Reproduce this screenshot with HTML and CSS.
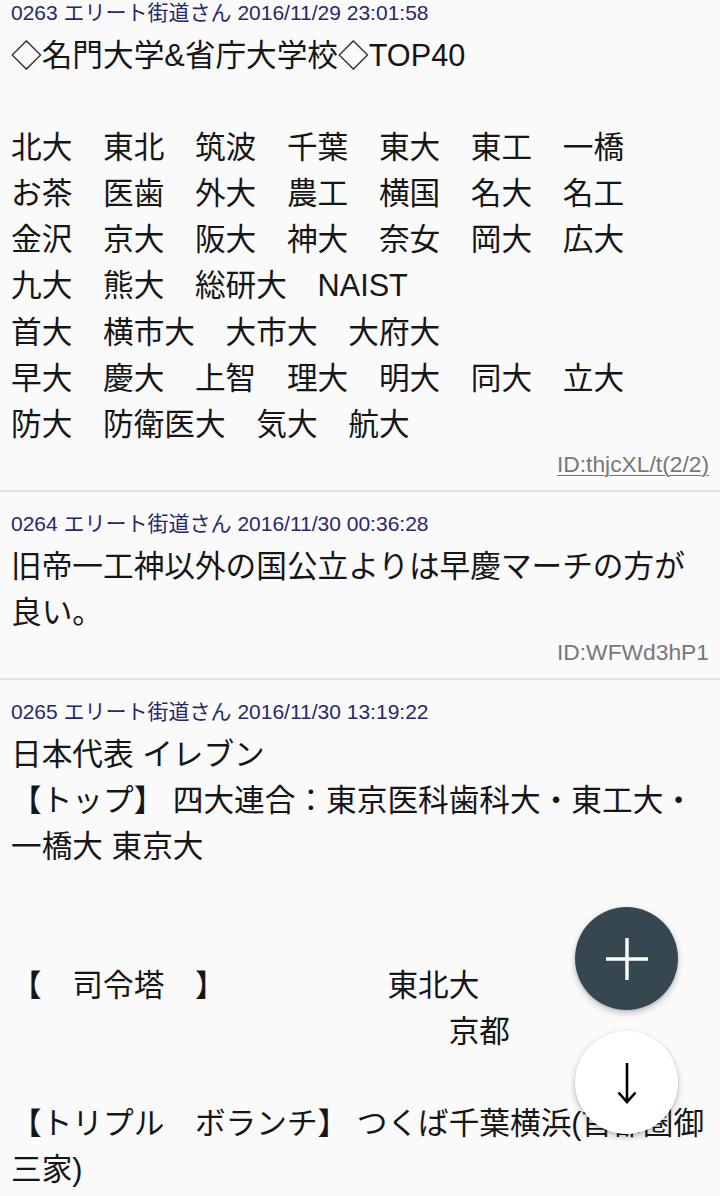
FILE: index.html
```html
<!DOCTYPE html>
<html lang="ja">
<head>
<meta charset="utf-8">
<title>エリート街道</title>
<link rel="stylesheet" href="styles.css">
</head>
<body>
<main class="thread">
  <article class="post post-first">
    <div class="meta">0263 エリート街道さん 2016/11/29 23:01:58</div>
    <div class="body">◇名門大学&amp;省庁大学校◇TOP40

北大　東北　筑波　千葉　東大　東工　一橋
お茶　医歯　外大　農工　横国　名大　名工
金沢　京大　阪大　神大　奈女　岡大　広大
九大　熊大　総研大　NAIST
首大　横市大　大市大　大府大
早大　慶大　上智　理大　明大　同大　立大
防大　防衛医大　気大　航大</div>
    <div class="id"><a class="id-link" href="#">ID:thjcXL/t(2/2)</a></div>
  </article>
  <article class="post">
    <div class="meta">0264 エリート街道さん 2016/11/30 00:36:28</div>
    <div class="body">旧帝一工神以外の国公立よりは早慶マーチの方が良い。</div>
    <div class="id">ID:WFWd3hP1</div>
  </article>
  <article class="post">
    <div class="meta">0265 エリート街道さん 2016/11/30 13:19:22</div>
    <div class="body">日本代表 イレブン
【トップ】 四大連合：東京医科歯科大・東工大・一橋大 東京大


【　司令塔　】　　　　　 東北大
　　　　　　　　　　　　　　 京都

【トリプル　ボランチ】 つくば千葉横浜(首都圏御三家)</div>
  </article>
</main>
<div class="fabs">
  <button class="fab fab-add" type="button" aria-label="書き込む">
    <svg width="44" height="44" viewBox="0 0 44 44"><path d="M22 1V43M1 22H43" stroke="#fff" stroke-width="3.4" fill="none"/></svg>
  </button>
  <button class="fab fab-down" type="button" aria-label="下へ">
    <svg width="24" height="44" viewBox="0 0 24 44"><path d="M12 2V41M3.5 31.5L12 41L20.5 31.5" stroke="#000" stroke-width="2.6" fill="none" stroke-linejoin="miter"/></svg>
  </button>
</div>
</body>
</html>
```
FILE: styles.css
```css
html, body {
  margin: 0;
  padding: 0;
  background: #fafafa;
}
body {
  font-family: "Liberation Sans", "Noto Sans CJK JP", sans-serif;
  color: #161616;
  overflow: hidden;
  height: 1196px;
  text-spacing-trim: space-all;
}
.thread {
  margin-top: -19px;
}
.post {
  padding: 13px 11px 11px 11px;
  border-bottom: 2px solid #e3e3e3;
}
.meta {
  font-size: 21px;
  line-height: 38px;
  color: #27286a;
  white-space: nowrap;
}
.body {
  font-size: 30.67px;
  line-height: 46.1px;
  white-space: pre-wrap;
  word-break: normal;
}
.id {
  margin-top: 2px;
  font-size: 22.8px;
  line-height: 30px;
  text-align: right;
  color: #777;
}
.id-link {
  color: #777;
  text-decoration: underline;
  text-underline-offset: 3px;
  text-decoration-thickness: 1px;
}
.fabs {
  position: fixed;
  right: 42px;
  bottom: 62px;
  display: flex;
  flex-direction: column;
  gap: 21px;
}
.fab {
  width: 103px;
  height: 103px;
  border-radius: 50%;
  border: none;
  padding: 0;
  display: flex;
  align-items: center;
  justify-content: center;
  box-shadow: 0 3px 7px rgba(0, 0, 0, 0.22), 0 1px 3px rgba(0, 0, 0, 0.12);
}
.fab-add {
  background: #37474f;
}
.fab-down {
  background: #ffffff;
}
```
